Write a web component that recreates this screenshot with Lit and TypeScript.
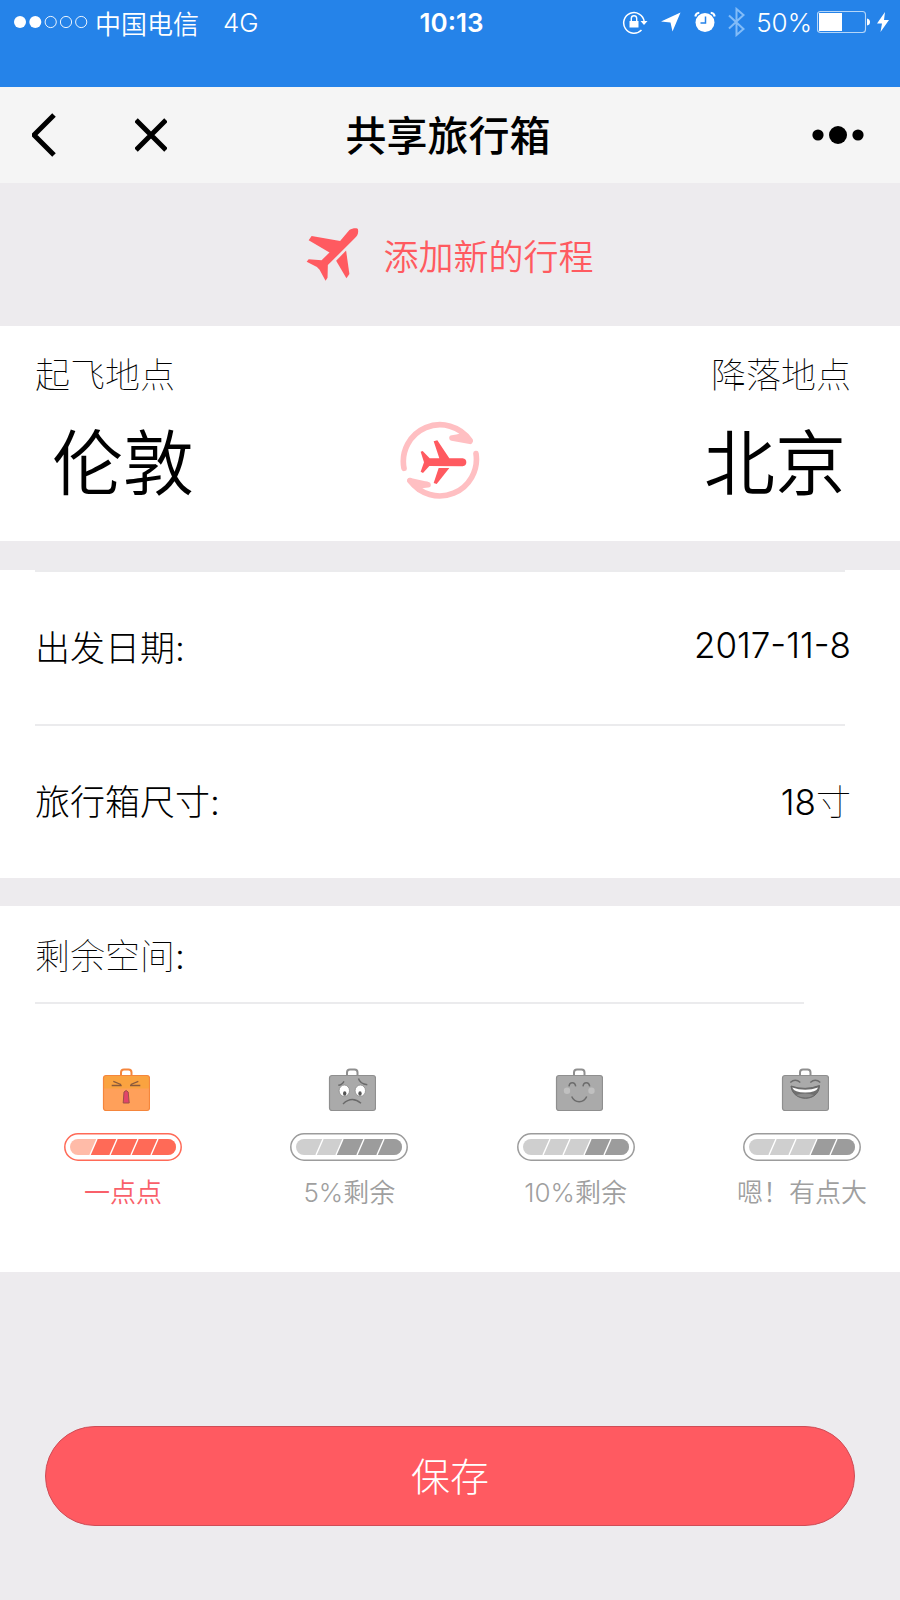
import { LitElement, html, css, svg } from "lit";
import { customElement, property, state } from "lit/decorators.js";
import { classMap } from "lit/directives/class-map.js";

type Mood = "shout" | "sad" | "smile" | "laugh";

interface SpaceOption {
  id: Mood;
  label: string;
  free: number;
}

const OPTIONS: SpaceOption[] = [
  { id: "shout", label: "一点点", free: 1 },
  { id: "sad", label: "5%剩余", free: 2 },
  { id: "smile", label: "10%剩余", free: 3 },
  { id: "laugh", label: "嗯！有点大", free: 3 },
];

const FACES = {
  shout: svg`
    <path d="M17.300 13.300 25 16.500M15.700 17.500H25.700M42.300 13.300 34.700 16.500M34 17.500H44.300"
      fill="none" stroke="#8a5a3c" stroke-width="1.300"/>
    <path d="M28 24q2.200-3 4.200 0l1 11h-6z" fill="#e2446a" stroke="#9c5048" stroke-width="1"/>`,
  sad: svg`
    <ellipse cx="22.300" cy="22.700" rx="5.200" ry="5.700" fill="#fff" stroke="#8a8a8a" stroke-width=".8"/>
    <ellipse cx="38.300" cy="22.700" rx="5.200" ry="5.700" fill="#fff" stroke="#8a8a8a" stroke-width=".8"/>
    <ellipse cx="22.700" cy="25.500" rx="1.700" ry="2.300" fill="#555"/>
    <ellipse cx="38" cy="25.500" rx="1.700" ry="2.300" fill="#555"/>
    <path d="M16.300 17.300Q20 17 22 13.300M36.500 10.500Q38 16 45.300 16.700M21 36Q30 27.500 39 35.300"
      fill="none" stroke="#6a6a6a" stroke-width="1.400"/>`,
  smile: svg`
    <circle cx="18" cy="22.700" r="3.200" fill="#c0c0c0"/>
    <circle cx="42.500" cy="22.700" r="3.200" fill="#c0c0c0"/>
    <path d="M20 18.300c.5-4.800 6-4.800 6.700 0M34 18.300c.5-4.800 6-4.800 6.700 0M22.700 28.500c3 7 12 7 15 0"
      fill="none" stroke="#6c6c6c" stroke-width="1.500"/>`,
  laugh: svg`
    <path d="M15.300 14.500q5-4.500 10 0M35.300 14.500q5-4.500 10 0" fill="none" stroke="#6c6c6c" stroke-width="1.400"/>
    <path d="M16 18q14 5 28.500-.5c-.5 17-27 17-28.500.5z" fill="#6f6f6f" stroke="#666" stroke-width="1"/>
    <path d="M17.200 19.500q13 4.500 26 0-2 5-13 5t-13-5z" fill="#fff"/>
    <path d="M21 27q9-3 18 0-8 5-18 0z" fill="#8d8d8d"/>`,
};

/** A suitcase with a mood face, a fill gauge and a caption; works as one radio choice. */
@customElement("space-choice")
class SpaceChoice extends LitElement {
  @property({ attribute: false }) option!: SpaceOption;
  @property({ type: Boolean }) checked = false;

  static styles = css`
    :host {
      display: block;
      width: 132px;
      flex: none;
    }
    .choice {
      display: flex;
      flex-direction: column;
      align-items: center;
      color: #9f9f9f;
      cursor: pointer;
    }
    .choice.on {
      color: #f9606a;
    }
    .radio {
      position: absolute;
      opacity: 0;
      pointer-events: none;
    }
    .case {
      width: 54px;
      height: 44px;
    }
    .gauge {
      width: 118px;
      height: 28px;
      margin: 21px 0 14px;
    }
    .caption {
      font-size: 26px;
      line-height: 36px;
      font-weight: 350;
      white-space: nowrap;
    }
    .radio:focus-visible ~ .gauge {
      outline: 2px solid currentColor;
      border-radius: 14px;
    }
  `;

  private pick() {
    this.dispatchEvent(new CustomEvent("pick", { detail: this.option.id }));
  }

  render() {
    const on = this.checked;
    const edge = on ? "#f5863c" : "#8f8f8f";
    const low = on ? "#ffbba8" : "#cfcfcf";
    const high = on ? "#ff6a57" : "#9c9c9c";
    const cuts = [26, 46, 67, 87];
    return html`
      <label class=${classMap({ choice: true, on })}>
        <input class="radio" type="radio" name="space" .checked=${on} @change=${this.pick} />
        <svg class="case" viewBox="0 0 54 44" aria-hidden="true">
          <path d="M25 8V4.500q0-3 3-3h4.500q3 0 3 3V8" fill="none" stroke=${edge} stroke-width="2"/>
          <rect x="7.500" y="7.500" width="46" height="35" rx="2.500" fill=${on ? "#ffa05a" : "#aaaaaa"}/>
          ${on ? svg`<path d="M8 20.500V8h45v12.500z" fill="#faa340"/>` : null}
          <rect x="7.500" y="7.500" width="46" height="35" rx="2.500" fill="none" stroke=${edge} stroke-width="1.200"/>
          ${FACES[this.option.id]}
        </svg>
        <svg class="gauge" viewBox="0 0 118 28" aria-hidden="true">
          <defs><clipPath id="tube"><rect x="6" y="6" width="106" height="16" rx="8"/></clipPath></defs>
          <rect x=".8" y=".8" width="116.400" height="26.400" rx="13.200" fill="#fff" stroke=${high} stroke-width="1.500"/>
          <g clip-path="url(#tube)">
            <rect width="118" height="28" fill=${low}/>
            <path d="M${cuts[this.option.free - 1]} 22l7-16h90v16z" fill=${high}/>
            ${cuts.map((x) => svg`<path d="M${x} 22l7-16" stroke="#fff" stroke-width="1.400"/>`)}
          </g>
        </svg>
        <span class="caption">${this.option.label}</span>
      </label>
    `;
  }
}

@customElement("app-root")
class AppRoot extends LitElement {
  @state() private space: Mood = "shout";
  @state() private from = "伦敦";
  @state() private to = "北京";

  static styles = css`
    :host {
      display: flex;
      flex-direction: column;
      min-height: 100vh;
      background: #edebee;
      color: #000;
      font-family: "Inter", "Noto Sans CJK SC", sans-serif;
      font-size: 35px;
      font-weight: 300;
    }
    button {
      font: inherit;
      color: inherit;
      background: none;
      border: 0;
      padding: 0;
      cursor: pointer;
    }
    svg {
      display: block;
    }
    .status {
      display: grid;
      grid-template-columns: 1fr auto 1fr;
      align-items: center;
      height: 44px;
      padding: 0 11px 43px 14px;
      background: #2583e9;
      color: #fff;
      font-size: 26px;
      font-weight: 350;
    }
    .status-side {
      display: flex;
      align-items: center;
    }
    .status-end {
      justify-content: flex-end;
    }
    .signal {
      margin-right: 7px;
    }
    .network {
      margin-left: 24px;
    }
    .time {
      font-weight: 600;
    }
    .glyphs {
      margin-right: 10px;
    }
    .battery {
      margin-left: 5px;
    }
    .nav {
      display: grid;
      grid-template-columns: 1fr auto 1fr;
      align-items: center;
      height: 96px;
      padding: 0 36px 0 32px;
      background: #f5f5f5;
    }
    .nav-start {
      display: flex;
      align-items: center;
      gap: 76px;
    }
    .more {
      justify-self: end;
    }
    .title {
      margin: 0;
      padding-top: 2px;
      font-size: 41px;
      line-height: 60px;
      font-weight: 500;
    }
    .intro {
      display: flex;
      align-items: center;
      justify-content: center;
      gap: 24px;
      height: 143px;
      color: #ff5a60;
    }
    .intro-text {
      margin: 0;
      font-size: 35px;
      font-weight: 350;
    }
    .card {
      background: #fff;
    }
    .route {
      padding: 24px 0 30px;
    }
    .route-heads {
      display: flex;
      justify-content: space-between;
      padding: 0 49px 0 35px;
      line-height: 50px;
      font-weight: 100;
    }
    .route-cities {
      display: flex;
      align-items: center;
      justify-content: space-between;
      margin-top: 15px;
      padding: 0 54px 0 52px;
      font-size: 71px;
      line-height: 96px;
      font-weight: 350;
    }
    .swap {
      padding: 0 18px 4px 0;
    }
    .details {
      margin: 29px 0 28px;
    }
    .row {
      display: flex;
      align-items: center;
      justify-content: space-between;
      height: 146px;
      padding: 0 49px 6px 35px;
    }
    .value {
      margin: 0;
    }
    .unit {
      font-weight: 100;
    }
    .rule {
      height: 2px;
      margin: 0 55px 0 35px;
      border: 0;
      background: #ebebed;
    }
    .space {
      margin: 0;
      padding: 0 0 61px;
      border: 0;
    }
    .space-title {
      padding: 4px 35px 0;
      line-height: 92px;
      font-weight: 100;
    }
    .colon {
      font-weight: 300;
    }
    .space-rule {
      margin-right: 96px;
    }
    .choices {
      display: flex;
      justify-content: space-between;
      padding: 64px 32px 0 57px;
    }
    .footer {
      display: flex;
      padding: 154px 45px 74px;
    }
    .save {
      flex: 1;
      height: 100px;
      padding-bottom: 4px;
      border: 1px solid #cf4c56;
      border-radius: 50px;
      background: #ff5a61;
      color: #fff;
      font-size: 39px;
    }
  `;

  private swap() {
    [this.from, this.to] = [this.to, this.from];
  }

  render() {
    return html`
      <div class="status">
        <div class="status-side">
          <svg class="signal" width="74" height="14" viewBox="0 0 74 14" aria-hidden="true">
            <circle cx="6" cy="7" r="6" fill="#fff"/>
            <circle cx="21.300" cy="7" r="6" fill="#fff"/>
            <g fill="none" stroke="#fff" stroke-width=".9">
              <circle cx="36.700" cy="7" r="5.600"/><circle cx="52" cy="7" r="5.600"/><circle cx="67.200" cy="7" r="5.600"/>
            </g>
          </svg>
          <span>中国电信</span>
          <span class="network">4G</span>
        </div>
        <span class="time">10:13</span>
        <div class="status-side status-end">
          <svg class="glyphs" width="124" height="30" viewBox="0 0 124 30" fill="#fff" aria-hidden="true">
            <path d="M19.500 23A10.300 10.300 0 1 1 22.200 14.500" fill="none" stroke="#fff" stroke-width="1.500"/>
            <path d="M18.500 14h7l-3.500 4z"/>
            <path d="M7.500 14h9v6.500h-9z"/>
            <path d="M9.300 14v-2.500a2.700 2.700 0 0 1 5.400 0V14" fill="none" stroke="#fff" stroke-width="1.400"/>
            <path d="M58.500 5.500 50.500 24.500 48.500 15.500 39 14.500z"/>
            <circle cx="83" cy="15.500" r="9.500"/>
            <path d="M73.300 9.500q.5-3.500 4-3.800M92.700 9.500q-.5-3.500-4-3.800" fill="none" stroke="#fff" stroke-width="2"/>
            <path d="M83.500 9.500v6.500H78.500" fill="none" stroke="#2583e9" stroke-width="1.500"/>
            <path d="M107 8.500 121.500 22 114.500 28V2L121.500 8 107 21.500" fill="none" stroke="#82bcf8" stroke-width="2"/>
          </svg>
          <span>50%</span>
          <svg class="battery" width="72" height="24" viewBox="0 0 72 24" fill="#fff" aria-hidden="true">
            <rect x=".5" y="1.500" width="48" height="21" rx="3" fill="none" stroke="#b5d6f8" stroke-width="1.100"/>
            <path d="M2 3h23v18H2z"/>
            <path d="M50 8.500q3 .5 3 3.500t-3 3.500z"/>
            <path d="M68 2 60 13.500h5L63.500 22 72 10h-5z"/>
          </svg>
        </div>
      </div>

      <header class="nav">
        <div class="nav-start">
          <button type="button" aria-label="返回">
            <svg width="27" height="44" viewBox="0 0 27 44"><path d="M22 2 2 22l20 20" fill="none" stroke="#000" stroke-width="5"/></svg>
          </button>
          <button type="button" aria-label="关闭">
            <svg width="32" height="34" viewBox="0 0 32 34"><path d="M1 2l30 30M31 2 1 32" fill="none" stroke="#000" stroke-width="5"/></svg>
          </button>
        </div>
        <h1 class="title">共享旅行箱</h1>
        <button class="more" type="button" aria-label="更多">
          <svg width="52" height="18" viewBox="0 0 52 18"><circle cx="6" cy="9" r="5.600"/><circle cx="26" cy="9" r="9"/><circle cx="46" cy="9" r="5.600"/></svg>
        </button>
      </header>

      <section class="intro">
        <svg width="53" height="53" viewBox="84 82 158 160" fill="#ff5a60" aria-hidden="true">
          <path d="M214 88C224 81 241 81 240 87C242 98 238 106 230 113L149 194L148 232L142 241L124 208L116 200L85 184L91 176L130 179L154 156L91 119L100 106L186 121Z"/>
          <path d="M204 150 214 221 205 234 174 181z"/>
        </svg>
        <h2 class="intro-text">添加新的行程</h2>
      </section>

      <section class="card route">
        <div class="route-heads"><span>起飞地点</span><span>降落地点</span></div>
        <div class="route-cities">
          <span>${this.from}</span>
          <button class="swap" type="button" aria-label="交换" @click=${this.swap}>
            <svg width="80" height="80" viewBox="62 242 240 240">
              <g fill="#ffbfc2" stroke="#ffbfc2" stroke-width="17" stroke-linecap="round" stroke-linejoin="round">
                <path d="M74 384A110 110 0 0 1 272 300" fill="none"/>
                <path d="M218 293 272 303 248 278Q254 290 218 293z"/>
                <path d="M290 340A110 110 0 0 1 92 421" fill="none"/>
                <path d="M146 433 92 421 118 446Q112 436 146 433z"/>
              </g>
              <g fill="#ff5a60">
                <path d="M250 354Q261 356 261 366T250 378L150 377 131 398 124 394 134 366 124 334 130 332 151 354 180 354 163 303 174 300 210 354z"/>
                <path d="M178 383H210L172 431 163 428z"/>
              </g>
            </svg>
          </button>
          <span>${this.to}</span>
        </div>
      </section>

      <section class="card details">
        <hr class="rule" />
        <div class="row"><span>出发日期:</span><time class="value" datetime="2017-11-08">2017-11-8</time></div>
        <hr class="rule" />
        <div class="row"><span>旅行箱尺寸:</span><span class="value">18<span class="unit">寸</span></span></div>
      </section>

      <section class="card space" role="radiogroup" aria-labelledby="space-title">
        <div class="space-title" id="space-title">剩余空间<span class="colon">:</span></div>
        <hr class="rule space-rule" />
        <div class="choices">
          ${OPTIONS.map(
            (o) => html`<space-choice
              .option=${o}
              .checked=${o.id === this.space}
              @pick=${(e: CustomEvent<Mood>) => (this.space = e.detail)}
            ></space-choice>`
          )}
        </div>
      </section>

      <footer class="footer"><button class="save" type="button">保存</button></footer>
    `;
  }
}
